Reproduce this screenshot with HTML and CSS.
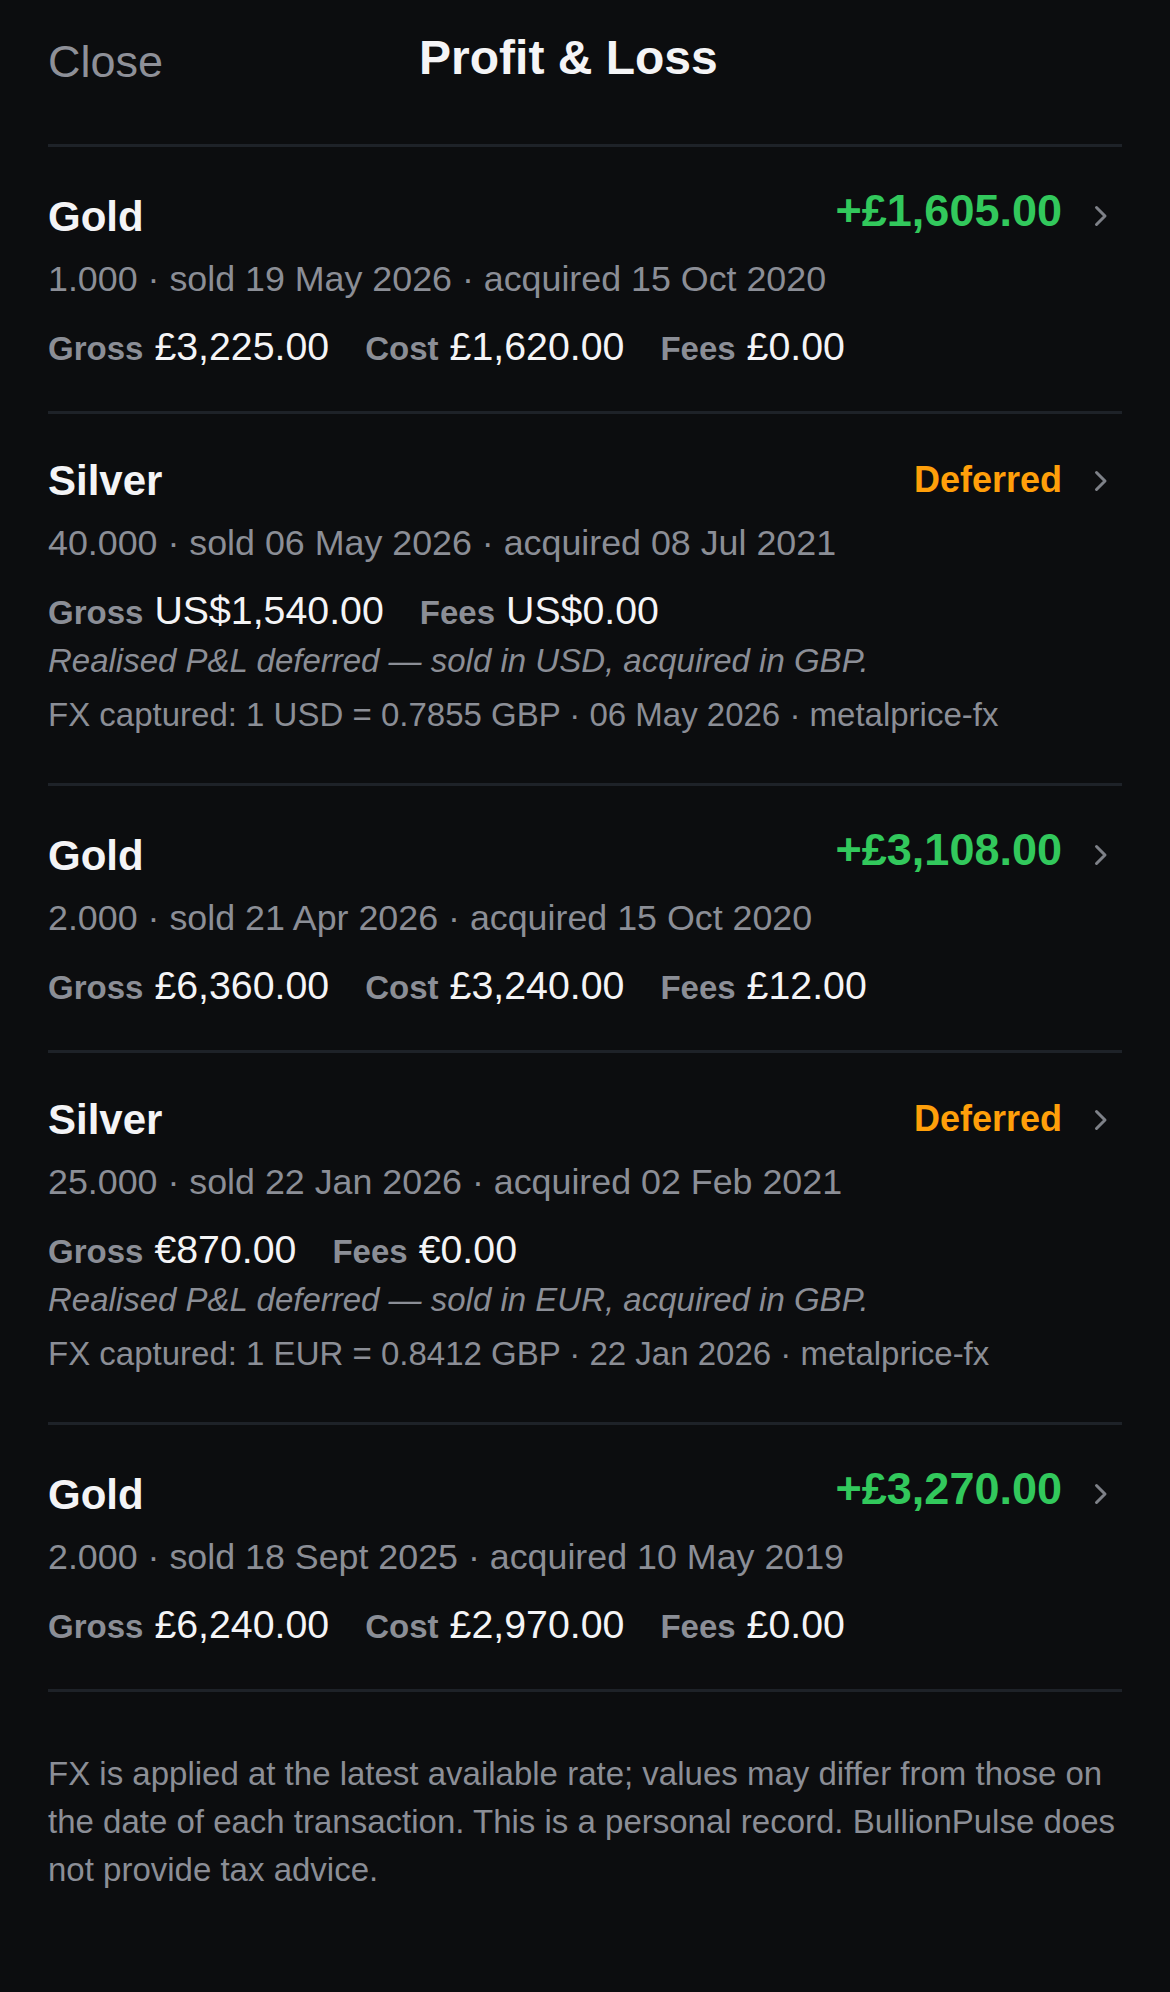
FILE: index.html
```html
<!DOCTYPE html>
<html>
  <head>
    <title>Profit &amp; Loss</title>
    <meta name="viewport" content="width=device-width, initial-scale=1.0" />
    <link rel="stylesheet" href="styles.css">
  </head>
  <body>
    <article class="sheet">
      <header class="topbar">
        <span class="close">Close</span>
        <h1 class="title">Profit &amp; Loss</h1>
      </header>

      <section class="trades">
        <div class="trade">
          <div class="trade-head">
            <span class="metal">Gold</span>
            <span class="result gain">+£1,605.00</span>
            <svg class="chevron" width="14" height="22" viewBox="0 0 14 22"><path d="M2.5 2.5 11 11 2.5 19.5" /></svg>
          </div>
          <div class="meta">1.000 · sold 19 May 2026 · acquired 15 Oct 2020</div>
          <div class="stats">
            <span class="stat"><span class="stat-label">Gross</span><span class="stat-value">£3,225.00</span></span>
            <span class="stat"><span class="stat-label">Cost</span><span class="stat-value">£1,620.00</span></span>
            <span class="stat"><span class="stat-label">Fees</span><span class="stat-value">£0.00</span></span>
          </div>
        </div>

        <div class="trade">
          <div class="trade-head">
            <span class="metal">Silver</span>
            <span class="result deferred">Deferred</span>
            <svg class="chevron" width="14" height="22" viewBox="0 0 14 22"><path d="M2.5 2.5 11 11 2.5 19.5" /></svg>
          </div>
          <div class="meta">40.000 · sold 06 May 2026 · acquired 08 Jul 2021</div>
          <div class="stats">
            <span class="stat"><span class="stat-label">Gross</span><span class="stat-value">US$1,540.00</span></span>
            <span class="stat"><span class="stat-label">Fees</span><span class="stat-value">US$0.00</span></span>
          </div>
          <div class="note">Realised P&amp;L deferred — sold in USD, acquired in GBP.</div>
          <div class="fx">FX captured: 1 USD = 0.7855 GBP · 06 May 2026 · metalprice-fx</div>
        </div>

        <div class="trade">
          <div class="trade-head">
            <span class="metal">Gold</span>
            <span class="result gain">+£3,108.00</span>
            <svg class="chevron" width="14" height="22" viewBox="0 0 14 22"><path d="M2.5 2.5 11 11 2.5 19.5" /></svg>
          </div>
          <div class="meta">2.000 · sold 21 Apr 2026 · acquired 15 Oct 2020</div>
          <div class="stats">
            <span class="stat"><span class="stat-label">Gross</span><span class="stat-value">£6,360.00</span></span>
            <span class="stat"><span class="stat-label">Cost</span><span class="stat-value">£3,240.00</span></span>
            <span class="stat"><span class="stat-label">Fees</span><span class="stat-value">£12.00</span></span>
          </div>
        </div>

        <div class="trade">
          <div class="trade-head">
            <span class="metal">Silver</span>
            <span class="result deferred">Deferred</span>
            <svg class="chevron" width="14" height="22" viewBox="0 0 14 22"><path d="M2.5 2.5 11 11 2.5 19.5" /></svg>
          </div>
          <div class="meta">25.000 · sold 22 Jan 2026 · acquired 02 Feb 2021</div>
          <div class="stats">
            <span class="stat"><span class="stat-label">Gross</span><span class="stat-value">€870.00</span></span>
            <span class="stat"><span class="stat-label">Fees</span><span class="stat-value">€0.00</span></span>
          </div>
          <div class="note">Realised P&amp;L deferred — sold in EUR, acquired in GBP.</div>
          <div class="fx">FX captured: 1 EUR = 0.8412 GBP · 22 Jan 2026 · metalprice-fx</div>
        </div>

        <div class="trade">
          <div class="trade-head">
            <span class="metal">Gold</span>
            <span class="result gain">+£3,270.00</span>
            <svg class="chevron" width="14" height="22" viewBox="0 0 14 22"><path d="M2.5 2.5 11 11 2.5 19.5" /></svg>
          </div>
          <div class="meta">2.000 · sold 18 Sept 2025 · acquired 10 May 2019</div>
          <div class="stats">
            <span class="stat"><span class="stat-label">Gross</span><span class="stat-value">£6,240.00</span></span>
            <span class="stat"><span class="stat-label">Cost</span><span class="stat-value">£2,970.00</span></span>
            <span class="stat"><span class="stat-label">Fees</span><span class="stat-value">£0.00</span></span>
          </div>
        </div>
      </section>

      <p class="disclaimer">
        FX is applied at the latest available rate; values may differ from those on the date of each transaction. This is a personal record. BullionPulse does not provide tax advice.
      </p>
    </article>
  </body>
</html>
```

FILE: styles.css
```css
* {
  box-sizing: border-box;
}

body {
  margin: 0;
  font-family: "Liberation Sans", Arial, sans-serif;
  background: #0c0d0f;
  color: #f4f4f6;
}

.sheet {
  padding: 0 48px;
}

.topbar {
  display: flex;
  align-items: flex-start;
  padding: 32px 0 56px;
}

.close {
  margin-top: 4px;
  font-size: 45px;
  line-height: 52px;
  color: #8e9098;
}

.title {
  margin: 0 0 0 256px;
  font-size: 48px;
  line-height: 52px;
  font-weight: bold;
}

.trades {
  border-top: 3px solid #1e2228;
}

.trade {
  padding: 42px 0 41px;
  border-bottom: 3px solid #1e2228;
}

.trade-head {
  display: flex;
  align-items: flex-end;
}

.metal {
  flex: 1;
  font-size: 42px;
  line-height: 50px;
  font-weight: bold;
}

.result {
  font-weight: bold;
}

.result.gain {
  font-size: 45px;
  line-height: 44px;
  padding-bottom: 9px;
  color: #32c85c;
}

.result.deferred {
  font-size: 36px;
  line-height: 47px;
  padding-bottom: 3px;
  color: #ff9f0a;
}

.chevron {
  align-self: center;
  margin: 0 14px 0 32px;
  color: #7e8188;
}

.chevron path {
  fill: none;
  stroke: currentColor;
  stroke-width: 3;
  stroke-linecap: round;
  stroke-linejoin: round;
}

.meta {
  margin-top: 15px;
  font-size: 35.8px;
  line-height: 44px;
  color: #8b8e96;
}

.stats {
  display: flex;
  align-items: baseline;
  gap: 36px;
  margin-top: 21px;
}

.stat {
  display: flex;
  align-items: baseline;
  gap: 11px;
}

.stat-label {
  font-size: 33px;
  line-height: 40px;
  font-weight: bold;
  color: #8b8e96;
}

.stat-value {
  font-size: 39.3px;
  line-height: 48px;
}

.note {
  margin-top: 7px;
  font-size: 33px;
  line-height: 40px;
  font-style: italic;
  color: #8b8e96;
}

.fx {
  margin: 14px 0 7px;
  font-size: 33px;
  line-height: 40px;
  color: #8b8e96;
}

.disclaimer {
  margin: 0;
  padding: 58px 0;
  font-size: 33px;
  line-height: 48px;
  color: #8b8e96;
}
```
